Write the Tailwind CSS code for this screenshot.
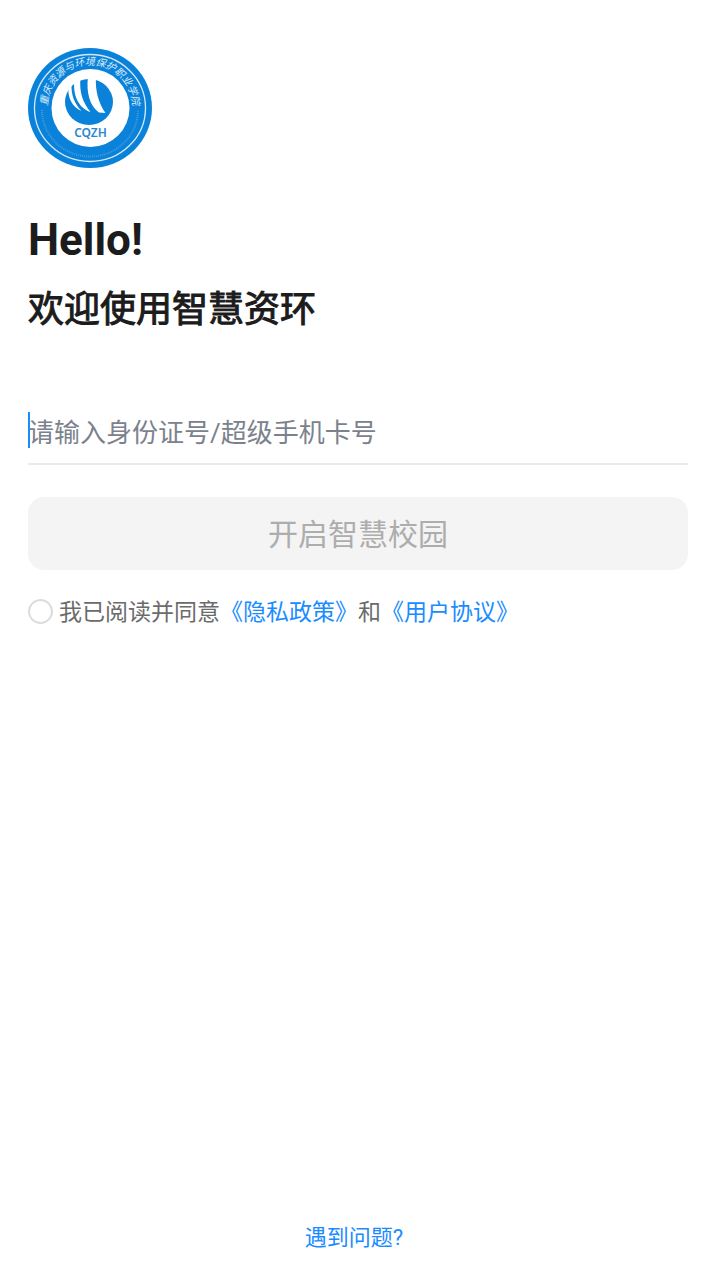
<!DOCTYPE html>
<html lang="zh-CN">
<head>
<meta charset="utf-8">
<meta name="viewport" content="width=device-width, initial-scale=1">
<title>智慧资环</title>
<script src="https://cdn.jsdelivr.net/npm/@tailwindcss/browser@4"></script>
</head>
<body class="bg-white font-['Roboto','Noto_Sans_CJK_SC',sans-serif]">
<main class="flex min-h-screen flex-col pt-12 pr-8 pb-[26px] pl-7">
  <svg class="h-[120px] w-[124px]" viewBox="0 0 124 120" role="img" aria-label="CQZH">
    <defs>
      <path id="arcTop" d="M20 66A42.500 42.500 0 1 1 104 66"/>
    </defs>
    <ellipse cx="62" cy="60" rx="62" ry="60" fill="#0b82d9"/>
    <ellipse cx="62" cy="60" rx="55.500" ry="53.500" fill="none" stroke="#d3e9fa" stroke-width="1.300"/>
    <ellipse cx="62.500" cy="60" rx="39" ry="39" fill="#fff"/>
    <text class="font-['Noto_Sans_CJK_SC',sans-serif]" font-size="10" font-style="italic" fill="#d9ecfb"><textPath href="#arcTop" startOffset="50%" text-anchor="middle">重庆资源与环境保护职业学院</textPath></text>
    <path d="M14 62A48 46.500 0 0 0 110 62" fill="none" stroke="#72b8ec" stroke-width="2" stroke-dasharray="1 1" opacity=".5"/>
    <ellipse cx="61" cy="54" rx="24" ry="23" fill="#0b82d9"/>
    <path d="M40.500 37C39 49 44 59 53.500 63C47 56 43 48 43.500 36ZM46.500 32C44.500 46 50 60 62.500 64C55 55 51 44 52.500 30ZM60 29C58 45 62 58 71 64.500L77.500 65C71 56 67 43 68 29Z" fill="#fff"/>
    <text class="font-['Noto_Sans',sans-serif]" x="62.500" y="89" text-anchor="middle" font-size="12" font-weight="600" fill="#2a86d2">CQZH</text>
  </svg>

  <h1 class="mt-12 text-[44px] leading-12 font-bold text-[#1c1c1c]">Hello!</h1>
  <p class="mt-[22px] text-4xl leading-12 text-[#1c1c1c] [-webkit-text-stroke:1px_#1c1c1c]">欢迎使用智慧资环</p>

  <form class="mt-[65px]">
    <div class="relative border-b-2 border-[#ebebeb]">
      <input id="account" type="text" aria-label="身份证号/超级手机卡号" placeholder="请输入身份证号/超级手机卡号" class="block h-16 w-full bg-transparent pt-1 text-[26px] text-[#1c1c1c] outline-none placeholder:text-[#7b828d]">
      <span class="absolute top-[13px] left-0 h-9 w-[2px] bg-[#1a8cff]"></span>
    </div>
    <button type="button" disabled class="mt-8 flex h-[73px] w-full items-center justify-center rounded-2xl bg-[#f4f4f4] pt-[2px] text-[30px] text-[#adadad]">开启智慧校园</button>
    <div class="mt-[23px] flex items-center text-[23px] leading-8 text-[#6b6b6b]">
      <input id="agree" type="checkbox" class="mr-1.5 size-[25px] shrink-0 appearance-none rounded-full border-2 border-[#dcdcdc] checked:border-[#1a8cff] checked:bg-[#1a8cff]">
      <p class="pt-1"><label for="agree">我已阅读并同意</label><a href="#privacy" class="text-[#1a8cff]">《隐私政策》</a>和<a href="#terms" class="text-[#1a8cff]">《用户协议》</a></p>
    </div>
  </form>

  <a href="#help" class="mt-auto mr-2 self-center text-[22px] leading-8 text-[#1a8cff]">遇到问题?</a>
</main>
</body>
</html>
